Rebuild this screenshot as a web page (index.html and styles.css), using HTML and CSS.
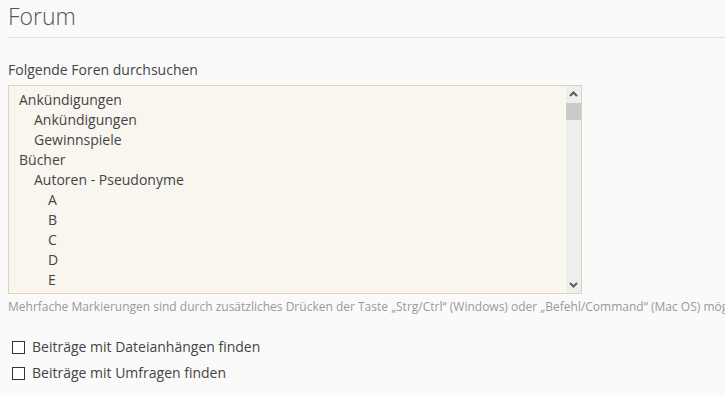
FILE: index.html
```html
<!DOCTYPE html>
<html lang="de">
<head>
<meta charset="utf-8">
<title>Forum</title>
<link rel="stylesheet" href="styles.css">
</head>
<body>
<div class="page">
  <h1 class="title">Forum</h1>
  <div class="field">
    <label class="field-label">Folgende Foren durchsuchen</label>
    <div class="listbox">
      <div class="list">
        <div class="opt l0">Ankündigungen</div>
        <div class="opt l1">Ankündigungen</div>
        <div class="opt l1">Gewinnspiele</div>
        <div class="opt l0">Bücher</div>
        <div class="opt l1">Autoren - Pseudonyme</div>
        <div class="opt l2">A</div>
        <div class="opt l2">B</div>
        <div class="opt l2">C</div>
        <div class="opt l2">D</div>
        <div class="opt l2">E</div>
      </div>
      <div class="scrollbar">
        <div class="sb-btn">
          <svg width="9" height="6" viewBox="0 0 9 6"><polyline points="1,5 4.5,1.5 8,5" fill="none" stroke="#5a5a5a" stroke-width="2"/></svg>
        </div>
        <div class="sb-track">
          <div class="sb-thumb"></div>
        </div>
        <div class="sb-btn">
          <svg width="9" height="6" viewBox="0 0 9 6"><polyline points="1,1 4.5,4.5 8,1" fill="none" stroke="#5a5a5a" stroke-width="2"/></svg>
        </div>
      </div>
    </div>
    <p class="hint">Mehrfache Markierungen sind durch zusätzliches Drücken der Taste „Strg/Ctrl“ (Windows) oder „Befehl/Command“ (Mac OS) möglich.</p>
  </div>
  <div class="checks">
    <label class="check"><input type="checkbox" class="box"><span>Beiträge mit Dateianhängen finden</span></label>
    <label class="check"><input type="checkbox" class="box"><span>Beiträge mit Umfragen finden</span></label>
  </div>
</div>
</body>
</html>
```

FILE: styles.css
```css
html, body {
  margin: 0;
  padding: 0;
  overflow: hidden;
  background: #fafafa;
}

body {
  font-family: "Open Sans", "Liberation Sans", sans-serif;
  color: #555;
  font-size: 13px;
}

.page {
  padding: 0 8px;
  width: 1000px;
}

.title {
  margin: 0;
  font-size: 23px;
  font-weight: 300;
  line-height: 33px;
  color: #555;
  padding-bottom: 4px;
  border-bottom: 1px solid #e0e0e0;
}

.field {
  margin-top: 22px;
}

.field-label {
  display: block;
  font-size: 14px;
  line-height: 20px;
  color: #444;
  margin-bottom: 5px;
}

.listbox {
  display: flex;
  width: 572px;
  height: 207px;
  border: 1px solid #e3d1b6;
  background: #f9f6f0;
}

.list {
  flex: 1;
  overflow: hidden;
  padding-top: 4px;
}

.opt {
  line-height: 20px;
  font-size: 14px;
  color: #444;
  white-space: nowrap;
}

.l0 { padding-left: 10px; }
.l1 { padding-left: 25px; }
.l2 { padding-left: 39px; }

.scrollbar {
  width: 15px;
  background: #eeeeee;
  border-left: 1px solid #fbfbfb;
  display: flex;
  flex-direction: column;
}

.sb-btn {
  height: 16px;
  display: flex;
  align-items: center;
  justify-content: center;
}

.sb-track {
  flex: 1;
  padding-top: 1px;
}

.sb-thumb {
  height: 17px;
  background: #cbcbcb;
}

.hint {
  margin: 5px 0 0;
  font-size: 12px;
  line-height: 16px;
  color: #999;
  white-space: nowrap;
}

.checks {
  margin-top: 22px;
  display: flex;
  flex-direction: column;
  gap: 6px;
}

.check {
  display: flex;
  align-items: center;
  gap: 7px;
  font-size: 14px;
  line-height: 20px;
  color: #444;
  padding-left: 4px;
}

.box {
  appearance: none;
  -webkit-appearance: none;
  margin: 0;
  width: 13px;
  height: 13px;
  border: 1px solid #333;
  background: #fff;
  border-radius: 0;
  box-sizing: border-box;
}
```
